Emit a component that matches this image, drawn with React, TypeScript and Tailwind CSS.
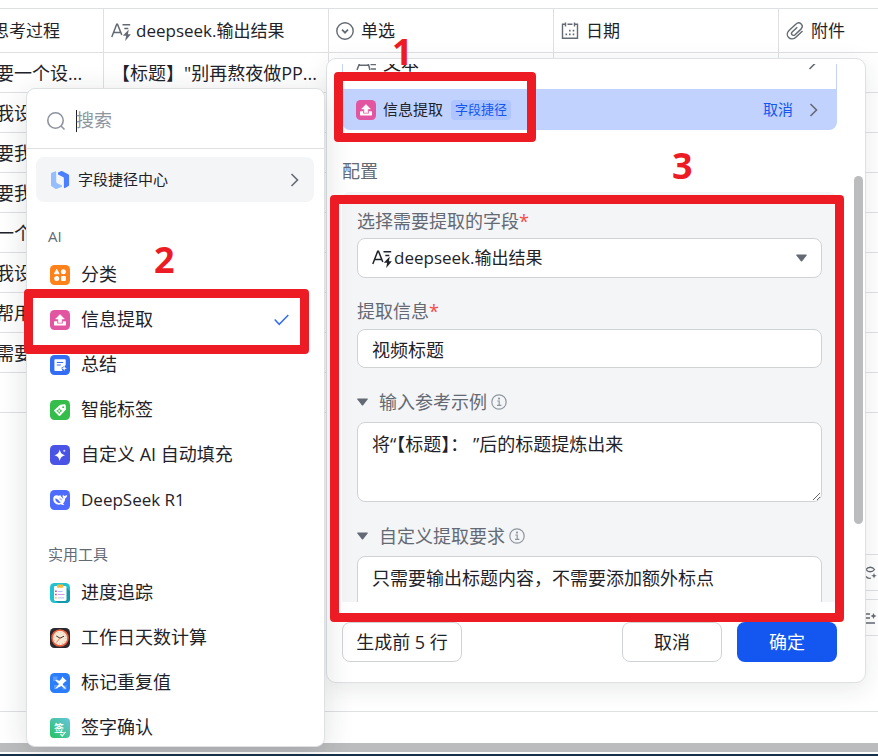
import React from "react";

const font =
  "font-['Open_Sans','Noto_Sans_CJK_SC',sans-serif]";

function TextAiIcon({ className }: { className: string }) {
  return (
    <svg viewBox="0 0 20 20" className={className} fill="none" stroke="currentColor" strokeWidth="1.5">
      <path d="M.8 16 5.7 3.200h.8L10.800 14M2.500 11.500h7.200M11.500 3.700h7.700M13.300 7.500h4" />
      <path d="m17.800 8.500-6 6.300h3.300L14.200 20l5.700-6.700h-3z" fill="currentColor" stroke="none" />
    </svg>
  );
}

function PlainTextIcon() {
  return (
    <svg viewBox="0 0 20 20" className="size-5 text-[#646a73]" fill="none" stroke="currentColor" strokeWidth="1.5">
      <path d="M1 17 4.500 8h7L14 17M3 12.300h9M14.500 7.500H20M14.500 11.500H20M15 16h5" />
    </svg>
  );
}

function ChevronRight() {
  return (
    <svg viewBox="0 0 10 16" className="h-4 w-[10px] shrink-0 text-[#646a73]" fill="none" stroke="currentColor" strokeWidth="1.6">
      <path d="m1.500 2 6 6-6 6" />
    </svg>
  );
}

function Triangle() {
  return (
    <svg viewBox="0 0 11 8" className="h-2 w-[11px] shrink-0 text-[#646a73]" fill="currentColor">
      <path d="M.8.5h9.400c.5 0 .7.5.4.9L6.100 7.200a.8.8 0 0 1-1.200 0L.4 1.400C.1 1 .3.5.8.5Z" />
    </svg>
  );
}

function InfoIcon() {
  return (
    <svg viewBox="0 0 16 16" className="size-4 shrink-0 text-[#8f959e]" fill="none" stroke="currentColor" strokeWidth="1.2">
      <circle cx="8" cy="8" r="7.2" />
      <path d="M6.3 7h1.9v4.3M6 11.4h4.4" />
      <circle cx="8" cy="4.6" r=".5" fill="currentColor" />
    </svg>
  );
}

function ExtractIcon() {
  return (
    <svg viewBox="0 0 20 20" className="size-5 shrink-0">
      <rect width="20" height="20" rx="4.5" fill="#e255a1" />
      <path d="M10 4.500 5.600 9h2.700v3.500h3.400V9h2.700z" fill="#fff" stroke="#fff" strokeWidth=".5" strokeLinejoin="round" />
      <path d="M4.700 11.300h2.500v2.200h5.600v-2.200h2.500c.4 0 .7.3.7.700v2.700c0 .5-.4.900-.9.900H4.900c-.5 0-.9-.4-.9-.9V12c0-.4.3-.7.7-.7Z" fill="#fff" />
    </svg>
  );
}

function ClassifyIcon() {
  return (
    <svg viewBox="0 0 20 20" className="size-5 shrink-0">
      <rect width="20" height="20" rx="4.5" fill="#ff811a" />
      <path d="m6.7 4.2 2.5 4.6H4.2z" fill="#fff" stroke="#fff" strokeWidth=".7" strokeLinejoin="round" />
      <circle cx="13.4" cy="6.7" r="2.5" fill="#fff" />
      <circle cx="6.7" cy="13.5" r="2.5" fill="#fff" />
      <rect x="11" y="11.1" width="4.9" height="4.9" rx="1" fill="#fff" />
    </svg>
  );
}

function SummaryIcon() {
  return (
    <svg viewBox="0 0 20 20" className="size-5 shrink-0">
      <rect width="20" height="20" rx="4.5" fill="#336df4" />
      <path d="M5.4 4.2h9.3c.6 0 1 .4 1 1v5l-4.4 2.5 1.2 3.2H5.4c-.6 0-1-.4-1-1V5.2c0-.6.4-1 1-1Z" fill="#fff" />
      <path d="M6.8 7.5h6.4M6.8 10h4" stroke="#336df4" strokeWidth="1.1" />
      <path d="m14.2 10.4.8 2 2 .8-2 .8-.8 2-.8-2-2-.8 2-.8z" fill="#fff" />
    </svg>
  );
}

function TagIcon() {
  return (
    <svg viewBox="0 0 20 20" className="size-5 shrink-0">
      <rect width="20" height="20" rx="4.5" fill="#35bd4b" />
      <path d="m10.2 4.7 4.4-.4c.6 0 1 .4 1.1.9l.3 4.2-5.8 6.3c-.4.4-1 .4-1.4 0l-4.4-4.4c-.4-.4-.4-1 0-1.4z" fill="#fff" />
      <path d="m9.3 8.5.7 1.7 1.7.7-1.7.8-.7 1.7-.8-1.7-1.7-.8 1.7-.7z" fill="none" stroke="#35bd4b" strokeWidth=".9" />
      <circle cx="13.2" cy="7.2" r=".9" fill="#35bd4b" />
    </svg>
  );
}

function SparkIcon() {
  return (
    <svg viewBox="0 0 20 20" className="size-5 shrink-0">
      <rect width="20" height="20" rx="4.5" fill="#4954e6" />
      <path d="M9.700 4.500c.9 3.600 2.200 5 5.700 5.700-3.500.8-4.800 2.200-5.700 5.700-.9-3.500-2.200-4.900-5.600-5.700 3.400-.7 4.700-2.100 5.600-5.700Z" fill="#fff" />
      <circle cx="14.3" cy="5.8" r="1.1" fill="#c9cdff" />
    </svg>
  );
}

function WhaleIcon() {
  return (
    <svg viewBox="0 0 20 20" className="size-5 shrink-0">
      <rect width="20" height="20" rx="4.5" fill="#4d6bfe" />
      <path d="M3.2 8.7c0-2 1.4-3.6 3.5-3.5.8 0 1.6.2 2.1.6.5-.5 1.2-.8 1.8-.6-.2.5.1 1.1.7 1.6.9.7 1.4 1.7 2 2.2.1-1-.7-1.500-.7-2.800 0-.7.2-1.200.5-1.700.3 1 .8 1.400 1.600 1.400.7 0 1.500-.5 2.500-.9-.2 1.900-1 2.900-2.100 3.600-.1 2.400-.9 3.900-2.200 5.100.5.5 1 .6 1.500.7-.9.7-2.300.7-3.500-.1-3.900 1.400-7.700-1.400-7.700-5.600Z" fill="#fff" />
      <path d="M5.200 8.400c2 .4 2.900 1.100 3.600 2.200.7 1.200 1.400 1.700 2.200 2-2.500 1-5.600-.6-5.800-4.200Z" fill="#4d6bfe" />
      <path d="M9.500 8.800c.9-.2 1.800.4 1.800 1.400" fill="none" stroke="#4d6bfe" strokeWidth=".8" />
    </svg>
  );
}

function ClipboardIcon() {
  return (
    <svg viewBox="0 0 20 20" className="size-5 shrink-0">
      <rect width="20" height="20" rx="4.5" fill="#21c3d0" />
      <path d="M16.5 4.5 20 8v8a4 4 0 0 1-4 4H8l-3.500-2.500z" fill="#1499ad" />
      <rect x="4" y="3" width="12.5" height="15" rx="1.4" fill="#fff" />
      <rect x="7" y="1.4" width="6.4" height="3.4" rx="1" fill="#f6b83c" />
      <path d="M5 8.3h1.8M5 11.5h1.8" stroke="#e0489c" strokeWidth="1.4" />
      <path d="M5 14.9h1.8" stroke="#f6b83c" strokeWidth="1.4" />
      <path d="M8 8.5h4.5M8 14.9h6" stroke="#a9c4f7" />
      <path d="M8 11.5h6.5" stroke="#cf9be9" />
    </svg>
  );
}

function ClockIcon() {
  return (
    <svg viewBox="0 0 20 20" className="size-5 shrink-0">
      <rect width="20" height="20" rx="4.5" fill="#2a2a2e" />
      <circle cx="10" cy="10" r="8" fill="#f6e8d2" stroke="#ef5b3c" strokeWidth="1.6" />
      <circle cx="10" cy="10" r="6" fill="none" stroke="#a79a88" strokeWidth=".9" strokeDasharray=".6 2.54" />
      <path d="m6.2 7.900 3.800 2.300 4-2" fill="none" stroke="#3b3734" strokeWidth="1" />
      <path d="m10.6 9.300-4 5" stroke="#ef5b3c" strokeWidth=".8" />
    </svg>
  );
}

function PinIcon() {
  return (
    <svg viewBox="0 0 20 20" className="size-5 shrink-0">
      <rect width="20" height="20" rx="4.5" fill="#2a7dfb" />
      <path d="M3 3.500h4.500V8H3zM4 12h4v4H4zM12.500 12.500h4v4h-4z" fill="#5c9cff" />
      <path d="m12.200 3.400 4.500 4.500-1.300.700-2.400 2.200-.2 1 3 3.400-.7.700-3.600-3-6.500 3.200 4-5.200L5.300 7.400l.7-.7 3.600 1 2.100-2.500z" fill="#fff" />
    </svg>
  );
}

function SignIcon() {
  return (
    <span className="flex size-5 shrink-0 items-center justify-center rounded bg-linear-to-tr from-[#1fc25a] to-[#65c3dd] text-[10px] leading-5 font-bold text-white">
      签
      <svg viewBox="0 0 6 6" className="-ml-1 mt-3 size-[6px]" fill="none" stroke="#eaffee" strokeWidth="1.2">
        <path d="m.5 3 1.700 2L5.500.8" />
      </svg>
    </span>
  );
}

function CenterLogo() {
  return (
    <svg viewBox="0 0 20 20" className="size-5 shrink-0">
      <path d="M1 4.200c0-.8.400-1.300 1.100-1.600l3-1.200c.7-.2 1.100.1 1.100.8v9.300c0 .8.300 1.300 1 1.700l4.800 2.400v1.200l-5 2c-.6.200-1.200.2-1.800-.1L2 16.600c-.7-.4-1-.9-1-1.700z" fill="#94beff" />
      <path d="M8 2.600 10.800 1.200c.6-.3 1.100-.3 1.700 0l5.700 3c.6.300.9.800.9 1.500v9c0 .7-.3 1.200-.9 1.600l-3.200 1.800c-.6.300-1.100 0-1.100-.7V8.600c0-.7-.3-1.200-.9-1.500L8 4.600z" fill="#4c7fff" />
    </svg>
  );
}

type Item = { label: string; icon: React.ReactNode; checked?: boolean; latin?: boolean };

const aiItems: Item[] = [
  { label: "分类", icon: <ClassifyIcon /> },
  { label: "信息提取", icon: <ExtractIcon />, checked: true },
  { label: "总结", icon: <SummaryIcon /> },
  { label: "智能标签", icon: <TagIcon /> },
  { label: "自定义 AI 自动填充", icon: <SparkIcon /> },
  { label: "DeepSeek R1", icon: <WhaleIcon />, latin: true },
];

const toolItems: Item[] = [
  { label: "进度追踪", icon: <ClipboardIcon /> },
  { label: "工作日天数计算", icon: <ClockIcon /> },
  { label: "标记重复值", icon: <PinIcon /> },
  { label: "签字确认", icon: <SignIcon /> },
];

function MenuGroup({ title, items }: { title: string; items: Item[] }) {
  return (
    <section>
      <h2 className="pl-[21px] text-[15px] leading-8 text-[#646a73]">{title}</h2>
      <ul>
        {items.map((item) => (
          <li key={item.label}>
            <button className="flex h-[45px] w-full items-center gap-[11px] pr-[35px] pl-[23px] text-left text-[#1f2329]">
              {item.icon}
              <span className={item.latin ? "flex-1 text-[17px]" : "flex-1 text-[18px]"}>{item.label}</span>
              {item.checked && (
                <svg viewBox="0 0 15 12" className="h-3 w-[15px] text-[#336df4]" fill="none" stroke="currentColor" strokeWidth="1.5">
                  <path d="m.7 5.500 4.500 4.800L14.300 1" />
                </svg>
              )}
            </button>
          </li>
        ))}
      </ul>
    </section>
  );
}

const rows = [
  ["要一个设...", "【标题】\"别再熬夜做PP..."],
  ["我设", ""],
  ["要我", ""],
  ["要我", ""],
  ["一个", ""],
  ["我设", ""],
  ["帮用", ""],
  ["需要", ""],
  ["", ""],
];

function Sheet() {
  const th = "h-11 border-r border-b border-[#dee0e3] p-0 text-left font-normal last:border-r-0";
  const td = "h-10 border-r border-b border-[#dee0e3] p-0 last:border-r-0";
  return (
    <table className="w-full table-fixed border-separate border-spacing-0 border-t border-[#dee0e3] whitespace-nowrap text-[17px] text-[#1f2329]">
      <colgroup>
        <col className="w-[104px]" />
        <col className="w-[225px]" />
        <col className="w-[225px]" />
        <col className="w-[225px]" />
        <col />
      </colgroup>
      <thead>
        <tr>
          <th className={th}>
            <span className="-ml-2">思考过程</span>
          </th>
          <th className={th}>
            <span className="flex items-center gap-[5px] pl-[7px]">
              <TextAiIcon className="size-5 text-[#646a73]" />
              deepseek.输出结果
            </span>
          </th>
          <th className={th}>
            <span className="flex items-center gap-[7px] pl-[7px]">
              <svg viewBox="0 0 18 18" className="size-[18px] text-[#646a73]" fill="none" stroke="currentColor" strokeWidth="1.400">
                <circle cx="9" cy="9" r="8.200" />
                <path d="m6 7.700 3 3 3-3" strokeWidth="1.700" />
              </svg>
              单选
            </span>
          </th>
          <th className={th}>
            <span className="flex items-center gap-[7px] pl-[7px]">
              <svg viewBox="0 0 18 18" className="size-[18px] text-[#646a73]" fill="none" stroke="currentColor" strokeWidth="1.400">
                <path d="M4 2.300H1.500v14h15v-14H14M6.500 2.300h5M4.500.5v4M13.500.5v4" />
                <path d="M8 8.700h1.600M11.700 8.700h1.600M4.500 12.300h1.600M8 12.300h1.600M11.700 12.300h1.600" strokeWidth="1.700" />
              </svg>
              日期
            </span>
          </th>
          <th className={th}>
            <span className="flex items-center gap-[7px] pl-[7px]">
              <svg viewBox="0 0 24 24" className="size-[18px] text-[#646a73]" fill="none" stroke="currentColor" strokeWidth="1.900">
                <path d="m22 12-8.500 8c-3 3-7.500 3.300-10 .7s-2.400-6.600.5-9.500L13 3c2.200-2.100 5.300-2.200 7.200-.4 1.900 1.900 1.800 4.800-.3 6.900l-7.800 7.400c-1.300 1.200-3 1.300-4 .2-1.100-1.100-1-2.600.2-3.800l6.700-6.300" />
              </svg>
              附件
            </span>
          </th>
        </tr>
      </thead>
      <tbody className="text-[18px] leading-6">
        {rows.map(([first, second], i) => (
          <tr key={i}>
            <td className={td}>
              <span className="-ml-1">{first}</span>
            </td>
            <td className={td + " pl-2"}>{second}</td>
            <td className={td} />
            <td className={td} />
            <td className={td} />
          </tr>
        ))}
      </tbody>
    </table>
  );
}

function FieldMenu() {
  return (
    <aside className="absolute top-[88px] bottom-[9px] left-[26px] w-[299px] overflow-hidden rounded-[9px] border border-[#dee0e3] bg-white shadow-[0_6px_30px_rgba(31,35,41,0.14)]">
      <label className="flex h-[60px] items-center gap-[10px] border-b border-[#dee0e3] pt-1 pl-[19px]">
        <svg viewBox="0 0 20 20" className="size-5 text-[#8f959e]" fill="none" stroke="currentColor" strokeWidth="1.600">
          <circle cx="9.500" cy="9.500" r="7.700" />
          <path d="m15 15 3.500 3.500" />
        </svg>
        <span className="h-[22px] w-px bg-[#1f2329]" />
        <input
          aria-label="搜索"
          placeholder="搜索"
          className="-ml-[11px] min-w-0 flex-1 text-[18px] outline-none placeholder:text-[#8f959e]"
        />
      </label>
      <button className="mx-[9px] mt-2 flex h-[45px] w-[278px] items-center gap-2 rounded-lg bg-[#f4f5f7] pr-[14px] pl-[14px] text-left text-[15px] text-[#1f2329]">
        <CenterLogo />
        <span className="flex-1">字段捷径中心</span>
        <ChevronRight />
      </button>
      <div className="flex flex-col gap-4 pt-[18px]">
        <MenuGroup title="AI" items={aiItems} />
        <MenuGroup title="实用工具" items={toolItems} />
      </div>
    </aside>
  );
}

function ConfigPanel() {
  const field = "w-full rounded-lg border border-[#d0d3d6] bg-white px-[14px] text-[#1f2329]";
  return (
    <section className="absolute top-[58px] left-[326px] flex h-[625px] w-[540px] flex-col rounded-[10px] border border-[#dee0e3] bg-white pt-[5px] text-[18px] shadow-[0_6px_24px_rgba(31,35,41,0.10)]">
      <div className="min-h-0 flex-1 overflow-hidden px-[15px] pr-7">
        <div className="-mt-[27px] flex h-[52px] items-center gap-[7px] border-x border-[#c2d2ff] pr-[18px] pl-[13px]">
          <PlainTextIcon />
          <span className="flex-1">文本</span>
          <ChevronRight />
        </div>
        <div className="flex h-[41px] items-center rounded-b-lg bg-[#c2d2ff] pr-[18px] pl-[14px] text-[15px] text-[#1f2329]">
          <ExtractIcon />
          <span className="ml-[7px]">信息提取</span>
          <span className="ml-2 flex h-5 items-center rounded bg-[#afc5ff] px-1 text-[13px] text-[#1456f0]">字段捷径</span>
          <button className="mr-4 ml-auto text-[#1456f0]">取消</button>
          <ChevronRight />
        </div>
        <h2 className="pt-[26px] pb-[6px] text-[18px] leading-[30px] text-[#646a73]">配置</h2>
        <div className="rounded-t-lg bg-[#f4f5f7] px-[15px] pt-[14px] text-[#646a73]">
          <label htmlFor="source" className="block h-8 leading-[30px]">
            选择需要提取的字段<span className="text-[#f54a45]">*</span>
          </label>
          <div className={field + " flex h-10 items-center gap-[2px]"}>
            <TextAiIcon className="size-5 shrink-0" />
            <select id="source" className="h-full flex-1 appearance-none bg-transparent text-[17px] outline-none">
              <option>deepseek.输出结果</option>
            </select>
            <Triangle />
          </div>
          <label htmlFor="info" className="mt-4 block h-[35px] leading-[34px]">
            提取信息<span className="text-[#f54a45]">*</span>
          </label>
          <input id="info" defaultValue="视频标题" className={field + " block h-[39px] outline-none"} />
          <div className="mt-4 flex h-[38px] items-center gap-[11px] pb-[2px]">
            <Triangle />
            <label htmlFor="example" className="flex items-center gap-1">
              输入参考示例 <InfoIcon />
            </label>
          </div>
          <textarea
            id="example"
            defaultValue="将“【标题】： ”后的标题提炼出来"
            className={field + " block h-20 resize-y py-2 leading-[26px] outline-none"}
          />
          <div className="mt-4 flex h-[38px] items-center gap-[11px] pb-[2px]">
            <Triangle />
            <label htmlFor="rule" className="flex items-center gap-1">
              自定义提取要求 <InfoIcon />
            </label>
          </div>
          <textarea
            id="rule"
            defaultValue="只需要输出标题内容，不需要添加额外标点"
            className={field + " block h-20 resize-y py-2 leading-[26px] outline-none"}
          />
        </div>
      </div>
      <footer className="flex gap-[15px] pt-5 pr-7 pb-5 pl-[15px] text-[#1f2329]">
        <button className="mr-auto h-10 w-[120px] rounded-lg border border-[#d0d3d6] bg-white">生成前 5 行</button>
        <button className="h-10 w-[100px] rounded-lg border border-[#d0d3d6] bg-white">取消</button>
        <button className="h-10 w-[100px] rounded-lg bg-[#1456f0] text-white">确定</button>
      </footer>
      <div className="absolute top-[117px] right-[2px] h-[348px] w-[9px] rounded-full bg-[#bbbcbe]" />
    </section>
  );
}

function SideTools() {
  const box = "flex h-[37px] w-[30px] items-center border border-[#dee0e3] bg-white pl-[14px] text-[#646a73]";
  return (
    <div className="absolute top-[554px] right-[-2px] flex flex-col gap-2">
      <div className={box}>
        <svg viewBox="0 0 12 14" className="h-[14px] w-3 shrink-0" fill="none" stroke="currentColor" strokeWidth="1.300">
          <path d="M1 3.500C3 .5 7.500.5 9.500 3.500 7.500 6.500 3 6.500 1 3.500ZM1 10.500c1.500 2 3.500 2 5 1.500" />
          <path d="m9 7 .8 2 2 .8-2 .8-.8 2-.8-2-2-.8 2-.8z" fill="currentColor" stroke="none" />
        </svg>
      </div>
      <div className={box}>
        <svg viewBox="0 0 12 12" className="size-3 shrink-0" fill="none" stroke="currentColor" strokeWidth="1.400">
          <path d="M0 2h5M0 6h5M0 11h10" />
          <path d="m8.500 1 .9 2.100 2.100.9-2.100.9-.9 2.100-.9-2.100-2.100-.9 2.100-.9z" fill="currentColor" stroke="none" />
        </svg>
      </div>
    </div>
  );
}

function Annotations() {
  const frame = "absolute rounded border-[9px] border-[#ed1c24]";
  const digit = "absolute text-[36px] leading-9 font-bold text-[#ed1c24]";
  return (
    <div className="pointer-events-none absolute inset-0">
      <div className={frame + " top-[72px] left-[334px] h-[70px] w-[202px]"} />
      <div className={frame + " top-[289px] left-[24px] h-[65px] w-[285px]"} />
      <div className={frame + " top-[195px] left-[330px] h-[427px] w-[514px]"} />
      <span className={digit + " top-[34px] left-[392px]"}>1</span>
      <span className={digit + " top-[242px] left-[154px]"}>2</span>
      <span className={digit + " top-[148px] left-[672px]"}>3</span>
    </div>
  );
}

export default function App() {
  return (
    <main className={font + " relative flex h-screen min-h-[700px] flex-col overflow-hidden bg-white pt-2 text-[#1f2329]"}>
      <Sheet />
      <div className="mt-auto h-8 border-t border-[#dee0e3]" />
      <div className="h-[9px] bg-[#bbbcbe]" />
      <div className="mt-[2px] h-[2px] bg-[#17314a]" />
      <SideTools />
      <ConfigPanel />
      <FieldMenu />
      <Annotations />
    </main>
  );
}
